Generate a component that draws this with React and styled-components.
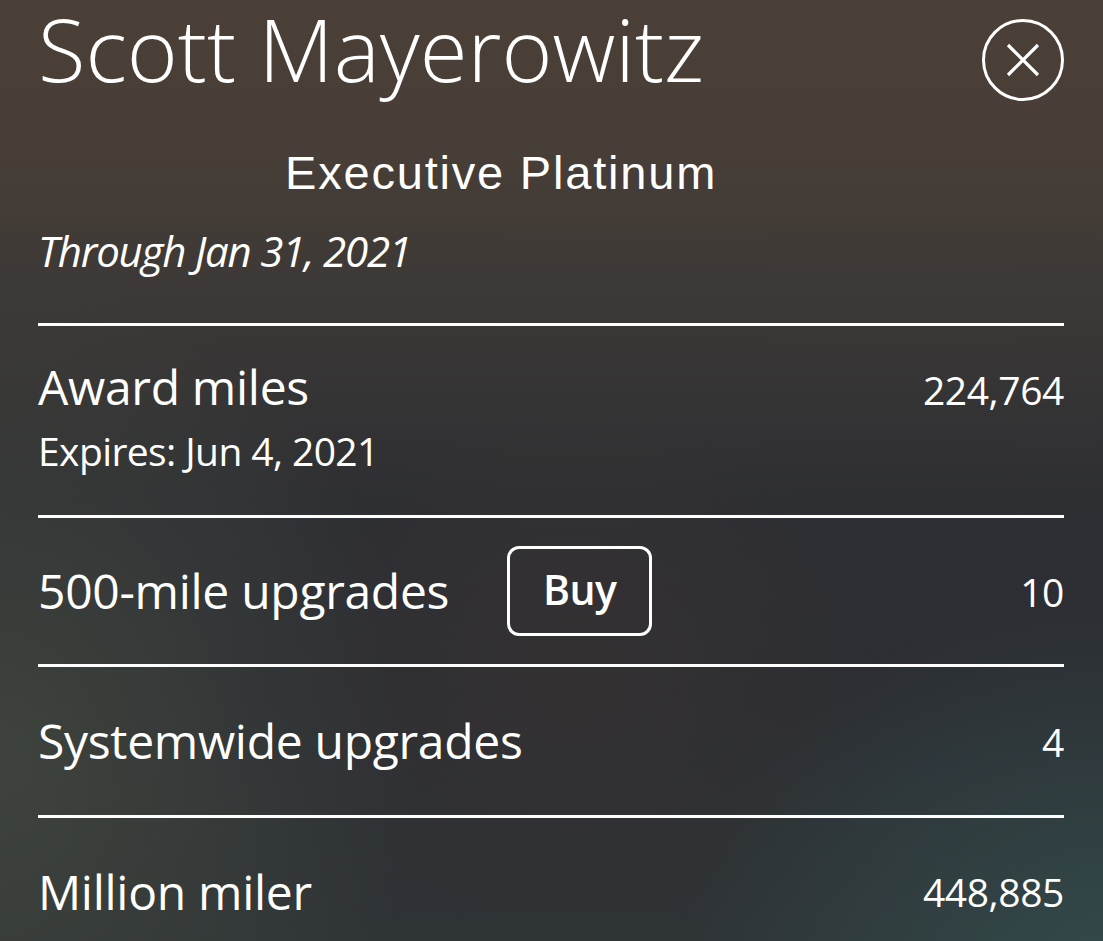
import React from "react";
import styled, { createGlobalStyle } from "styled-components";

const Global = createGlobalStyle`
  html, body { margin: 0; padding: 0; }
  body {
    font-family: "Open Sans", "Noto Sans", sans-serif;
    color: #fff;
    background: #2c2d32;
  }
`;

const Page = styled.div`
  min-height: 941px;
  box-sizing: border-box;
  padding: 0 39px 0 38px;
  background:
    radial-gradient(ellipse 420px 360px at 100% 100%, rgba(52, 80, 80, 0.75), rgba(52, 80, 80, 0) 100%),
    radial-gradient(ellipse 420px 480px at 0% 78%, rgba(68, 74, 64, 0.75), rgba(68, 74, 64, 0) 100%),
    radial-gradient(ellipse 300px 260px at 52% 70%, rgba(62, 52, 48, 0.45), rgba(62, 52, 48, 0) 100%),
    linear-gradient(180deg, #4b4037 0%, #473e37 16%, #3b3836 32%, #2e2f33 52%, #2c2e33 72%, #2f3437 100%);
  overflow: hidden;
`;

const Header = styled.header`
  display: flex;
  justify-content: space-between;
  align-items: flex-start;
  padding-top: 1px;
`;

const Name = styled.h1`
  margin: 0;
  font-size: 87px;
  line-height: 1.1;
  font-weight: 300;
  letter-spacing: 0;
`;

const CloseButton = styled.button`
  margin-top: 18px;
  width: 82px;
  height: 82px;
  border-radius: 50%;
  border: 3px solid #fff;
  background: transparent;
  display: flex;
  align-items: center;
  justify-content: center;
  padding: 0;
  box-sizing: border-box;
`;

const Tier = styled.div`
  margin-top: 48px;
  padding-left: 247px;
  font-family: "Liberation Sans", Arial, sans-serif;
  font-size: 47px;
  line-height: 1;
  font-weight: 400;
  letter-spacing: 1.8px;
`;

const Through = styled.div`
  margin-top: 34px;
  font-size: 42px;
  line-height: 1;
  font-style: italic;
  font-weight: 400;
  letter-spacing: -1.2px;
`;

const List = styled.div`
  margin-top: 51px;
`;

const Row = styled.div`
  border-top: 3px solid #fff;
  height: ${(p) => p.$h}px;
  box-sizing: border-box;
  display: flex;
  align-items: ${(p) => (p.$top ? "baseline" : "center")};
  justify-content: space-between;
  padding-top: ${(p) => p.$pt || 0}px;
`;

const LabelGroup = styled.div`
  display: flex;
  flex-direction: column;
`;

const LabelLine = styled.div`
  display: flex;
  align-items: center;
`;

const Label = styled.span`
  font-size: 48px;
  line-height: 1;
  font-weight: 400;
  letter-spacing: -0.3px;
`;

const Sub = styled.span`
  margin-top: 20px;
  font-size: 39px;
  line-height: 1;
  font-weight: 400;
  letter-spacing: -0.6px;
`;

const Value = styled.span`
  font-size: 39px;
  line-height: 1;
  font-weight: 400;
  letter-spacing: -0.4px;
`;

const BuyButton = styled.button`
  margin-left: 58px;
  width: 145px;
  height: 90px;
  box-sizing: border-box;
  border: 3px solid #fff;
  border-radius: 12px;
  background: transparent;
  color: #fff;
  font-family: "Open Sans", "Noto Sans", sans-serif;
  font-size: 41px;
  font-weight: 600;
  letter-spacing: -0.5px;
  display: flex;
  align-items: center;
  justify-content: center;
  padding: 0 0 4px 0;
`;

function CloseIcon() {
  return (
    <svg width="34" height="34" viewBox="0 0 34 34" fill="none">
      <path d="M2 2 L32 32 M32 2 L2 32" stroke="#fff" strokeWidth="3.2" strokeLinecap="butt" />
    </svg>
  );
}

export default function App() {
  return (
    <>
      <Global />
      <Page>
        <Header>
          <Name>Scott Mayerowitz</Name>
          <CloseButton aria-label="Close">
            <CloseIcon />
          </CloseButton>
        </Header>
        <Tier>Executive Platinum</Tier>
        <Through>Through Jan 31, 2021</Through>
        <List>
          <Row $h={192} $top $pt={37}>
            <LabelGroup>
              <Label>Award miles</Label>
              <Sub>Expires: Jun 4, 2021</Sub>
            </LabelGroup>
            <Value>224,764</Value>
          </Row>
          <Row $h={149}>
            <LabelLine>
              <Label>500-mile upgrades</Label>
              <BuyButton>Buy</BuyButton>
            </LabelLine>
            <Value>10</Value>
          </Row>
          <Row $h={151}>
            <Label>Systemwide upgrades</Label>
            <Value>4</Value>
          </Row>
          <Row $h={150}>
            <Label>Million miler</Label>
            <Value>448,885</Value>
          </Row>
        </List>
      </Page>
    </>
  );
}
